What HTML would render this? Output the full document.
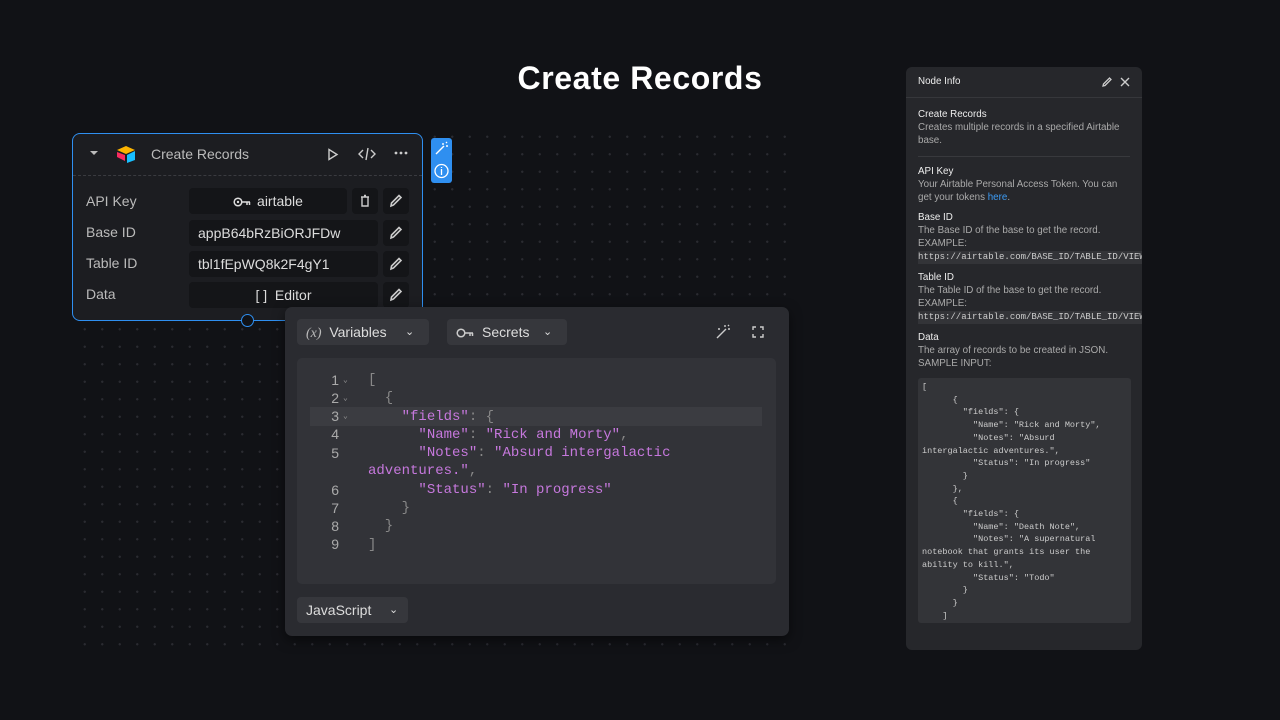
<!DOCTYPE html>
<html><head><style>
*{margin:0;padding:0;box-sizing:border-box}
body{width:1280px;height:720px;background:#111216;font-family:"Liberation Sans",sans-serif;position:relative;overflow:hidden;color:#ddd}
.dots{position:absolute;left:76px;top:128px;width:715px;height:520px;background-image:radial-gradient(circle,#2a2b31 1px,transparent 1.3px);background-size:17.5px 17.5px}
.title{position:absolute;left:0;width:1280px;top:60px;text-align:center;font-size:32px;font-weight:bold;color:#fff;letter-spacing:.6px}
.node{position:absolute;left:72px;top:133px;width:351px;height:188px;background:#1c1d21;border:1.5px solid #2f8ff0;border-radius:8px}
.nh{height:42px;border-bottom:1px dashed #3a3b40;position:relative}
.lbl{position:absolute;left:13px;font-size:14px;color:#bbb}
.fld{position:absolute;background:#141518;border-radius:4px;height:26px;font-size:14px;color:#ddd;line-height:26px}
.ib{position:absolute;width:26px;height:26px;background:#141518;border-radius:4px}
.ed{position:absolute;left:285px;top:307px;width:504px;height:329px;background:#2a2b30;border-radius:7px;box-shadow:0 4px 12px rgba(0,0,0,.5)}
.btn{position:absolute;background:#36373c;border-radius:4px;height:26px;font-size:14px;color:#ddd;line-height:26px}
.code{position:absolute;left:12px;top:51px;width:479px;height:226px;background:#323338;border-radius:5px;font-family:"Liberation Mono",monospace;font-size:14px}
.ln{position:absolute;left:22px;width:20px;text-align:right;color:#aaa;font-family:"Liberation Sans",sans-serif;font-size:14px}
.c{position:absolute;white-space:pre;color:#888}
.p{color:#c678dd}
.info{position:absolute;left:906px;top:67px;width:236px;height:583px;background:#26272b;border-radius:6px;font-size:9.8px;color:#aaa;overflow:hidden}
.info h4{font-size:9.8px;color:#eee;font-weight:normal}
.mono{font-family:"Liberation Mono",monospace;font-size:9px;color:#ccc;background:#333438;white-space:pre;display:inline-block}
</style></head><body>
<div class="dots"></div>
<div class="title">Create Records</div>

<div class="node">
 <div class="nh">
  <svg style="position:absolute;left:16px;top:16px" width="10" height="6"><path d="M1 1L5 5L9 1Z" fill="#bbb"/></svg>
  <svg style="position:absolute;left:42px;top:11px" width="22" height="18" viewBox="0 0 22 18"><path d="M2 5L11 1L20 5L11 9Z" fill="#fcb400"/><path d="M12 10L20 6V15L12 18Z" fill="#18bfff"/><path d="M2 7L10 10V16L2 12Z" fill="#f82b60"/></svg>
  <span style="position:absolute;left:78px;top:12px;font-size:14px;color:#bbb">Create Records</span>
  <svg style="position:absolute;left:254px;top:14px" width="12" height="13"><path d="M2 1.5L10 6.5L2 11.5Z" fill="none" stroke="#ccc" stroke-width="1.4"/></svg>
  <svg style="position:absolute;left:285px;top:13px" width="18" height="14"><path d="M5 3L1 7L5 11M13 3L17 7L13 11M10 1L8 13" fill="none" stroke="#ccc" stroke-width="1.4"/></svg>
  <svg style="position:absolute;left:321px;top:17px" width="14" height="4"><circle cx="2" cy="2" r="1.4" fill="#ccc"/><circle cx="7" cy="2" r="1.4" fill="#ccc"/><circle cx="12" cy="2" r="1.4" fill="#ccc"/></svg>
 </div>
 <div class="lbl" style="top:59px">API Key</div>
 <div class="lbl" style="top:90px">Base ID</div>
 <div class="lbl" style="top:121px">Table ID</div>
 <div class="lbl" style="top:152px">Data</div>
 <div class="fld" style="left:116px;top:54px;width:158px;text-align:center"><svg width="18" height="10" style="vertical-align:-1px;margin-right:6px"><circle cx="5" cy="5" r="3.8" fill="none" stroke="#ddd" stroke-width="1.5"/><circle cx="5" cy="5" r="1.2" fill="#ddd"/><path d="M9 5H17M14 5V8M16.5 5V8" stroke="#ddd" stroke-width="1.5"/></svg>airtable</div>
 <div class="ib" style="left:279px;top:54px"><svg width="26" height="26"><path d="M9 9H17M12 7.5H14M10 9.5V18H16V9.5" fill="none" stroke="#ccc" stroke-width="1.4"/></svg></div>
 <div class="fld" style="left:116px;top:86px;width:189px;padding-left:9px">appB64bRzBiORJFDw</div>
 <div class="fld" style="left:116px;top:117px;width:189px;padding-left:9px">tbl1fEpWQ8k2F4gY1</div>
 <div class="fld" style="left:116px;top:148px;width:189px;text-align:center">[ ]&nbsp; Editor</div>
 <div class="ib" style="left:310px;top:54px"></div><div class="ib" style="left:310px;top:86px"></div><div class="ib" style="left:310px;top:117px"></div><div class="ib" style="left:310px;top:148px"></div>
 <svg style="position:absolute;left:310px;top:54px" width="26" height="122"><g fill="none" stroke="#ccc" stroke-width="1.6"><path d="M8 18L8.5 15L16 7.5L18 9.5L10.5 17Z"/><path d="M8 50L8.5 47L16 39.5L18 41.5L10.5 49Z"/><path d="M8 81L8.5 78L16 70.5L18 72.5L10.5 80Z"/><path d="M8 112L8.5 109L16 101.5L18 103.5L10.5 111Z"/></g></svg>
 <div style="position:absolute;left:168px;top:180px;width:13px;height:13px;border-radius:50%;border:1.5px solid #2f8ff0;background:#111216"></div>
</div>
<div style="position:absolute;left:431px;top:138px;width:21px;height:45px;background:#2f8ff0;border-radius:3px">
 <svg width="21" height="45"><path d="M5 16L13 8M12 5V7M15 8H17M15 4L16 5" stroke="#fff" stroke-width="1.4" fill="none"/><circle cx="10.5" cy="33" r="6.5" fill="none" stroke="#fff" stroke-width="1.3"/><path d="M10.5 31V37M10.5 29V30" stroke="#fff" stroke-width="1.3"/></svg>
</div>

<div class="ed">
 <div class="btn" style="left:12px;top:12px;width:132px;padding-left:9px"><i style="font-family:'Liberation Serif',serif;color:#bbb">(x)</i>&nbsp; Variables <span style="position:absolute;left:108px;top:0;font-size:11px">⌄</span></div>
 <div class="btn" style="left:162px;top:12px;width:120px;padding-left:9px"><svg width="18" height="10" style="vertical-align:-1px;margin-right:8px"><circle cx="5" cy="5" r="3.8" fill="none" stroke="#ccc" stroke-width="1.5"/><path d="M9 5H17M14 5V8M16.5 5V8" stroke="#ccc" stroke-width="1.5"/></svg>Secrets<span style="position:absolute;left:96px;top:0;font-size:11px">⌄</span></div>
 <svg style="position:absolute;left:430px;top:17px" width="16" height="16"><path d="M2 14L11 5M10 1V3M13 5H15M13 1L14 2M3 5H5" stroke="#ccc" stroke-width="1.4" fill="none"/></svg>
 <svg style="position:absolute;left:467px;top:19px" width="12" height="12"><path d="M1 4V1H4M8 1H11V4M11 8V11H8M4 11H1V8" stroke="#ccc" stroke-width="1.4" fill="none"/></svg>
 <div class="code">
  <div style="position:absolute;left:13px;top:49px;width:452px;height:19px;background:#3b3c41"></div>
  <div class="ln" style="top:14px">1</div><div class="ln" style="top:32px">2</div><div class="ln" style="top:50px">3</div><div class="ln" style="top:68px">4</div><div class="ln" style="top:87px">5</div><div class="ln" style="top:124px">6</div><div class="ln" style="top:142px">7</div><div class="ln" style="top:160px">8</div><div class="ln" style="top:178px">9</div>
  <div class="c" style="left:46px;top:14px;font-size:8px;line-height:18px;color:#999">⌄<br>⌄<br>⌄</div>
  <div class="c" style="left:71px;top:13px;line-height:18.3px">[
  {
    <span class="p">"fields"</span>: {
      <span class="p">"Name"</span>: <span class="p">"Rick and Morty"</span>,
      <span class="p">"Notes"</span>: <span class="p">"Absurd intergalactic</span>
<span class="p">adventures."</span>,
      <span class="p">"Status"</span>: <span class="p">"In progress"</span>
    }
  }
]</div>
 </div>
 <div class="btn" style="left:12px;top:290px;width:111px;padding-left:9px">JavaScript <span style="position:absolute;left:92px;top:0;font-size:11px">⌄</span></div>
</div>

<div class="info">
 <div style="height:31px;border-bottom:1px solid #36373b;position:relative"><span style="position:absolute;left:12px;top:9px;color:#eee;font-size:9.8px">Node Info</span>
 <svg style="position:absolute;left:195px;top:9px" width="12" height="12"><path d="M2 10L2.5 8L8.5 2L10 3.5L4 9.5Z" stroke="#ccc" stroke-width="1.3" fill="none"/></svg>
 <svg style="position:absolute;left:214px;top:10px" width="10" height="10"><path d="M1 1L9 9M9 1L1 9" stroke="#ccc" stroke-width="1.4"/></svg></div>
 <div style="padding:11px 12px 0;line-height:12.9px;width:300px">
  <div style="width:212px"><h4>Create Records</h4>Creates multiple records in a specified Airtable base.</div>
  <div style="border-top:1px solid #38393d;margin:8px 0 9px;width:212px"></div>
  <div style="width:212px"><h4>API Key</h4>Your Airtable Personal Access Token. You can get your tokens <span style="color:#3d9cf5">here</span>.</div>
  <h4 style="margin-top:8px">Base ID</h4>The Base ID of the base to get the record.<br>EXAMPLE:<br><span class="mono">https://airtable.com/BASE_ID/TABLE_ID/VIEW</span>
  <h4 style="margin-top:8px">Table ID</h4>The Table ID of the base to get the record.<br>EXAMPLE:<br><span class="mono">https://airtable.com/BASE_ID/TABLE_ID/VIEW</span>
  <h4 style="margin-top:8px">Data</h4>The array of records to be created in JSON.<br>SAMPLE INPUT:
 </div>
 <div style="position:absolute;left:12px;top:311px;width:213px;height:245px;background:#333438;border-radius:3px;padding:3px 4px;font-family:'Liberation Mono',monospace;font-size:8.5px;line-height:12.7px;color:#ccc;white-space:pre">[
      {
        "fields": {
          "Name": "Rick and Morty",
          "Notes": "Absurd
intergalactic adventures.",
          "Status": "In progress"
        }
      },
      {
        "fields": {
          "Name": "Death Note",
          "Notes": "A supernatural
notebook that grants its user the
ability to kill.",
          "Status": "Todo"
        }
      }
    ]</div>
</div>
</body></html>
